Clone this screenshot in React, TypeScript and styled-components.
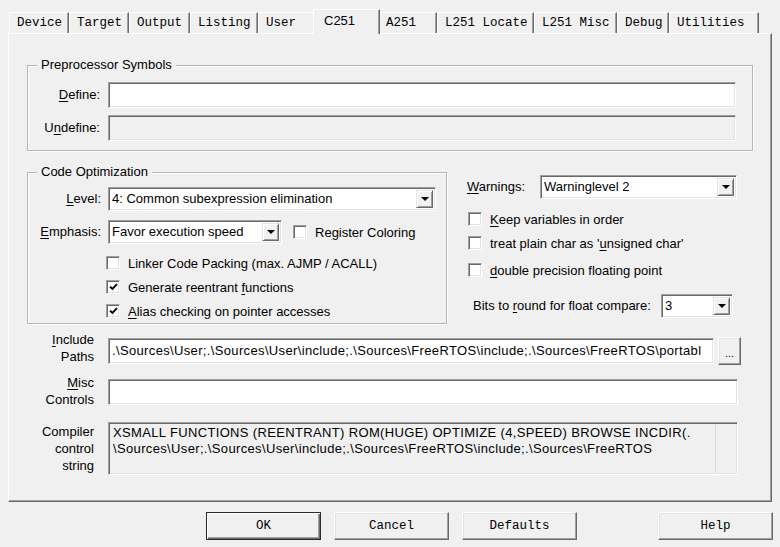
import React from 'react';
import styled, { createGlobalStyle } from 'styled-components';

const GlobalStyle = createGlobalStyle`
  html, body { margin: 0; padding: 0; background: #f0f0f0; }
  body {
    font-family: "Liberation Sans", Arial, sans-serif;
    font-size: 13px;
    color: #000;
    overflow: hidden;
  }
  #root { width: 780px; height: 547px; }
`;

const Window = styled.div`
  box-sizing: border-box;
  width: 780px;
  height: 547px;
  padding-top: 9px;
  background: #f0f0f0;
  display: flex;
  flex-direction: column;
`;

const TabStrip = styled.div`
  display: flex;
  align-items: flex-end;
  height: 24px;
  padding-left: 9px;
  position: relative;
  z-index: 1;
`;

const Tab = styled.div<{ $w: number }>`
  box-sizing: border-box;
  flex: none;
  width: ${(p) => p.$w}px;
  height: 21px;
  padding-left: 7px;
  border-top: 1px solid #fff;
  border-left: 1px solid #fff;
  border-right: 1px solid #696969;
  box-shadow: inset -1px 0 #a0a0a0;
  font-family: "Liberation Mono", "Courier New", monospace;
  font-size: 12.5px;
  line-height: 20px;
  white-space: nowrap;
  background: #f0f0f0;
`;

const ActiveTab = styled(Tab)`
  height: 25px;
  margin: 0 -2px -1px;
  padding: 3px 0 0 10px;
  font-family: "Liberation Sans", Arial, sans-serif;
  font-size: 13px;
  line-height: 15px;
  position: relative;
  z-index: 1;
`;

const Panel = styled.div`
  box-sizing: border-box;
  margin-left: 8px;
  width: 764px;
  height: 469px;
  border-top: 1px solid #fff;
  border-left: 1px solid #fff;
  border-right: 1px solid #696969;
  border-bottom: 1px solid #696969;
  box-shadow: inset -1px -1px #a0a0a0;
  padding: 0 18px;
  display: flex;
  flex-direction: column;
`;

const Group = styled.div<{ $w?: number; $mt?: number }>`
  position: relative;
  box-sizing: border-box;
  flex: none;
  width: ${(p) => (p.$w ? `${p.$w}px` : 'auto')};
  margin-top: ${(p) => p.$mt ?? 0}px;
  border: 1px solid #b4b4b4;
  box-shadow: inset 1px 1px #fff, 1px 1px #fff;
`;

const Legend = styled.span`
  position: absolute;
  top: -9px;
  left: 9px;
  padding: 0 4px;
  background: #f0f0f0;
  line-height: 16px;
  white-space: nowrap;
`;

const SymbolGrid = styled.div`
  display: grid;
  grid-template-columns: 72px minmax(0, 1fr);
  column-gap: 8px;
  row-gap: 7px;
  padding: 16px 16px 9px 0;
`;

const Label = styled.div<{ $w?: number; $left?: boolean }>`
  flex: none;
  width: ${(p) => (p.$w ? `${p.$w}px` : 'auto')};
  text-align: ${(p) => (p.$left ? 'left' : 'right')};
  line-height: 26px;
  white-space: nowrap;
`;

const U = styled.span`
  text-decoration: underline;
  text-underline-offset: 2px;
`;

const Field = styled.div<{ $disabled?: boolean; $h?: number; $spaced?: boolean }>`
  box-sizing: border-box;
  flex: 1;
  min-width: 0;
  height: ${(p) => p.$h ?? 26}px;
  background: ${(p) => (p.$disabled ? '#f0f0f0' : '#fff')};
  border-style: solid;
  border-width: 1px;
  border-color: #a0a0a0 #fff #fff #a0a0a0;
  box-shadow: inset 1px 1px #696969, inset -1px -1px #e3e3e3;
  padding: 0 3px;
  line-height: 24px;
  letter-spacing: ${(p) => (p.$spaced ? '0.35px' : 'normal')};
  white-space: nowrap;
  overflow: hidden;
`;

const MultiField = styled(Field)`
  display: flex;
  padding: 1px 1px 1px 4px;
  line-height: 16px;
  white-space: normal;
`;

const MultiText = styled.div`
  flex: 1;
  padding-top: 1px;
  white-space: nowrap;
`;

const ScrollTrack = styled.div`
  flex: none;
  width: 20px;
  border-left: 1px solid #dadada;
`;

const MiddleRow = styled.div`
  display: flex;
  align-items: flex-start;
  margin-top: 21px;
`;

const OptBody = styled.div`
  display: flex;
  flex-direction: column;
  padding: 14px 10px 4px 0;
`;

const FormRow = styled.div<{ $mt?: number; $w?: number; $pl?: number; $gap?: number }>`
  box-sizing: border-box;
  display: flex;
  align-items: center;
  height: 24px;
  margin-top: ${(p) => p.$mt ?? 0}px;
  padding-left: ${(p) => p.$pl ?? 0}px;
  width: ${(p) => (p.$w ? `${p.$w}px` : 'auto')};
  gap: ${(p) => p.$gap ?? 7}px;
`;

const Combo = styled.div<{ $w?: number; $ml?: string }>`
  box-sizing: border-box;
  display: flex;
  align-items: stretch;
  height: 24px;
  flex: ${(p) => (p.$w ? 'none' : '1')};
  width: ${(p) => (p.$w ? `${p.$w}px` : 'auto')};
  margin-left: ${(p) => p.$ml ?? '0'};
  background: #fff;
  border-style: solid;
  border-width: 1px;
  border-color: #a0a0a0 #fff #fff #a0a0a0;
  box-shadow: inset 1px 1px #696969, inset -1px -1px #e3e3e3;
  padding: 2px;
`;

const ComboText = styled.div`
  flex: 1;
  padding-left: 1px;
  line-height: 18px;
  white-space: nowrap;
  overflow: hidden;
`;

const ComboButton = styled.div`
  box-sizing: border-box;
  flex: none;
  width: 17px;
  display: flex;
  align-items: center;
  justify-content: center;
  background: #f0f0f0;
  border-style: solid;
  border-width: 1px;
  border-color: #e3e3e3 #696969 #696969 #e3e3e3;
  box-shadow: inset 1px 1px #fff, inset -1px -1px #a0a0a0;
`;

const Arrow = styled.span`
  width: 0;
  height: 0;
  border-left: 4px solid transparent;
  border-right: 4px solid transparent;
  border-top: 4px solid #000;
`;

const CheckRow = styled.div<{ $mt?: number; $pl?: number; $ml?: number }>`
  display: flex;
  align-items: center;
  height: 16px;
  gap: 8px;
  margin-top: ${(p) => p.$mt ?? 0}px;
  margin-left: ${(p) => p.$ml ?? 0}px;
  padding-left: ${(p) => p.$pl ?? 0}px;
  white-space: nowrap;
`;

const Box = styled.span`
  box-sizing: border-box;
  flex: none;
  width: 14px;
  height: 14px;
  display: inline-flex;
  align-items: center;
  justify-content: center;
  background: #fff;
  border-style: solid;
  border-width: 1px;
  border-color: #a0a0a0 #fff #fff #a0a0a0;
  box-shadow: inset 1px 1px #696969, inset -1px -1px #e3e3e3;
`;

const RightCol = styled.div`
  display: flex;
  flex-direction: column;
  margin-left: 20px;
  width: 271px;
`;

const BottomGrid = styled.div`
  display: grid;
  grid-template-columns: 67px minmax(0, 1fr);
  column-gap: 14px;
  margin-right: 15px;
`;

const BottomLabel = styled.div<{ $mt: number }>`
  align-self: start;
  margin-top: ${(p) => p.$mt}px;
  text-align: right;
  line-height: 17px;
`;

const BottomCell = styled.div<{ $mt: number }>`
  display: flex;
  align-items: center;
  gap: 4px;
  min-width: 0;
  margin-top: ${(p) => p.$mt}px;
`;

const DotsButton = styled.div`
  box-sizing: border-box;
  flex: none;
  width: 23px;
  height: 28px;
  margin-right: -3px;
  display: flex;
  align-items: flex-end;
  justify-content: center;
  padding-bottom: 6px;
  font-size: 11px;
  line-height: 10px;
  background: #f0f0f0;
  border-style: solid;
  border-width: 1px;
  border-color: #fff #696969 #696969 #fff;
  box-shadow: inset -1px -1px #a0a0a0, inset 1px 1px #e3e3e3;
`;

const ButtonBar = styled.div`
  display: flex;
  gap: 13px;
  margin-top: 10px;
  padding: 0 7px 0 206px;
`;

const Button = styled.div<{ $default?: boolean; $push?: boolean }>`
  box-sizing: border-box;
  width: 115px;
  height: 28px;
  display: flex;
  align-items: center;
  justify-content: center;
  margin-left: ${(p) => (p.$push ? 'auto' : '0')};
  font-family: "Liberation Mono", "Courier New", monospace;
  font-size: 12.5px;
  background: #f0f0f0;
  border-style: solid;
  border-width: 1px;
  border-color: ${(p) => (p.$default ? '#2a2a2a' : '#fff #696969 #696969 #fff')};
  box-shadow: ${(p) =>
    p.$default
      ? 'inset 1px 1px #fff, inset -1px -1px #696969, inset -2px -2px #a0a0a0'
      : 'inset -1px -1px #a0a0a0, inset 1px 1px #e3e3e3'};
`;

const CheckMark = () => (
  <svg width="9" height="8" viewBox="0 0 9 8">
    <path d="M1 3.6 L3.4 6 L8 1.2" fill="none" stroke="#000" strokeWidth="1.9" />
  </svg>
);

const CheckBox: React.FC<{ checked?: boolean }> = ({ checked }) => (
  <Box>{checked ? <CheckMark /> : null}</Box>
);

const ComboBox: React.FC<{ value: string; w?: number; ml?: string }> = ({ value, w, ml }) => (
  <Combo $w={w} $ml={ml}>
    <ComboText>{value}</ComboText>
    <ComboButton>
      <Arrow />
    </ComboButton>
  </Combo>
);

const tabs: { label: string; w: number; active?: boolean }[] = [
  { label: 'Device', w: 60 },
  { label: 'Target', w: 60 },
  { label: 'Output', w: 61 },
  { label: 'Listing', w: 68 },
  { label: 'User', w: 57 },
  { label: 'C251', w: 67, active: true },
  { label: 'A251', w: 59 },
  { label: 'L251 Locate', w: 97 },
  { label: 'L251 Misc', w: 83 },
  { label: 'Debug', w: 52 },
  { label: 'Utilities', w: 90 },
];

export default function App() {
  return (
    <>
      <GlobalStyle />
      <Window>
        <TabStrip>
          {tabs.map((t) =>
            t.active ? (
              <ActiveTab key={t.label} $w={t.w}>
                {t.label}
              </ActiveTab>
            ) : (
              <Tab key={t.label} $w={t.w}>
                {t.label}
              </Tab>
            )
          )}
        </TabStrip>
        <Panel>
          <Group $mt={31}>
            <Legend>Preprocessor Symbols</Legend>
            <SymbolGrid>
              <Label>
                <U>D</U>efine:
              </Label>
              <Field />
              <Label>
                U<U>n</U>define:
              </Label>
              <Field $disabled />
            </SymbolGrid>
          </Group>

          <MiddleRow>
            <Group $w={420}>
              <Legend>Code Optimization</Legend>
              <OptBody>
                <FormRow>
                  <Label $w={73}>
                    <U>L</U>evel:
                  </Label>
                  <ComboBox value="4: Common subexpression elimination" />
                </FormRow>
                <FormRow $mt={9}>
                  <Label $w={73}>
                    <U>E</U>mphasis:
                  </Label>
                  <ComboBox value="Favor execution speed" w={174} />
                  <CheckRow $ml={4}>
                    <CheckBox />
                    <span>
                      Re<U>g</U>ister Coloring
                    </span>
                  </CheckRow>
                </FormRow>
                <CheckRow $mt={11} $pl={78}>
                  <CheckBox />
                  <span>Linker Code Packing (max. AJMP / ACALL)</span>
                </CheckRow>
                <CheckRow $mt={8} $pl={78}>
                  <CheckBox checked />
                  <span>
                    Generate reentrant <U>f</U>unctions
                  </span>
                </CheckRow>
                <CheckRow $mt={8} $pl={78}>
                  <CheckBox checked />
                  <span>
                    <U>A</U>lias checking on pointer accesses
                  </span>
                </CheckRow>
              </OptBody>
            </Group>

            <RightCol>
              <FormRow $mt={3} $gap={0}>
                <Label $w={73} $left>
                  <U>W</U>arnings:
                </Label>
                <ComboBox value="Warninglevel 2" w={197} />
              </FormRow>
              <CheckRow $mt={12} $pl={1}>
                <CheckBox />
                <span>
                  <U>K</U>eep variables in order
                </span>
              </CheckRow>
              <CheckRow $mt={8} $pl={1}>
                <CheckBox />
                <span>
                  treat plain char as '<U>u</U>nsigned char'
                </span>
              </CheckRow>
              <CheckRow $mt={11} $pl={1}>
                <CheckBox />
                <span>
                  <U>d</U>ouble precision floating point
                </span>
              </CheckRow>
              <FormRow $mt={16} $w={266} $pl={6}>
                <Label>
                  Bits to <U>r</U>ound for float compare:
                </Label>
                <ComboBox value="3" w={72} ml="auto" />
              </FormRow>
            </RightCol>
          </MiddleRow>

          <BottomGrid>
            <BottomLabel $mt={7}>
              <U>I</U>nclude
              <br />
              Paths
            </BottomLabel>
            <BottomCell $mt={13}>
              <Field $spaced>
                .\Sources\User;.\Sources\User\include;.\Sources\FreeRTOS\include;.\Sources\FreeRTOS\portabl
              </Field>
              <DotsButton>...</DotsButton>
            </BottomCell>

            <BottomLabel $mt={9}>
              <U>M</U>isc
              <br />
              Controls
            </BottomLabel>
            <BottomCell $mt={10}>
              <Field />
            </BottomCell>

            <BottomLabel $mt={15}>
              Compiler
              <br />
              control
              <br />
              string
            </BottomLabel>
            <BottomCell $mt={14}>
              <MultiField $disabled $spaced $h={53}>
                <MultiText>
                  XSMALL FUNCTIONS (REENTRANT) ROM(HUGE) OPTIMIZE (4,SPEED) BROWSE INCDIR(.
                  <br />
                  \Sources\User;.\Sources\User\include;.\Sources\FreeRTOS\include;.\Sources\FreeRTOS
                </MultiText>
                <ScrollTrack />
              </MultiField>
            </BottomCell>
          </BottomGrid>
        </Panel>

        <ButtonBar>
          <Button $default>OK</Button>
          <Button>Cancel</Button>
          <Button>Defaults</Button>
          <Button $push>Help</Button>
        </ButtonBar>
      </Window>
    </>
  );
}
